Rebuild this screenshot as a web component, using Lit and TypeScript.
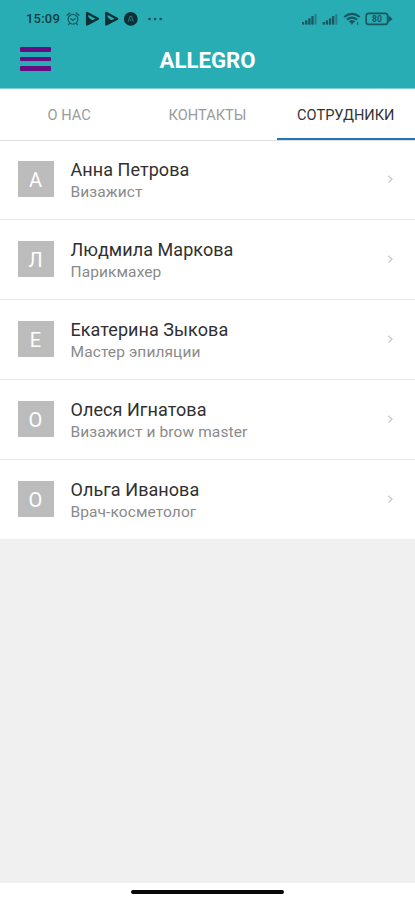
import { LitElement, html, css, svg } from "lit";
import { customElement, property, state } from "lit/decorators.js";
import { classMap } from "lit/directives/class-map.js";

interface Employee {
  name: string;
  role: string;
}

const EMPLOYEES: Employee[] = [
  { name: "Анна Петрова", role: "Визажист" },
  { name: "Людмила Маркова", role: "Парикмахер" },
  { name: "Екатерина Зыкова", role: "Мастер эпиляции" },
  { name: "Олеся Игнатова", role: "Визажист и brow master" },
  { name: "Ольга Иванова", role: "Врач-косметолог" },
];

@customElement("status-bar")
export class StatusBar extends LitElement {
  static styles = css`
    :host {
      display: flex;
      align-items: center;
      height: 37px;
      padding: 0 22px 0 26px;
      box-sizing: border-box;
      color: #14454c;
      font: 500 13px/38px Roboto, sans-serif;
    }
    .time {
      width: 40px;
      letter-spacing: 0.2px;
      white-space: nowrap;
      color: #123c43;
    }
    .left { display: block; }
    .right { display: block; margin-left: auto; }
    .charge { font: 700 8.5px Roboto, sans-serif; }
  `;

  private play(x: number) {
    return svg`<g transform="translate(${x} 0)">
      <path d="M1.6 3V14.4L12.4 8.7Z" fill="none" stroke="#0b3036" stroke-width="2.4" stroke-linejoin="round"/>
      <path d="M1.6 6V14L7.4 10.6L4.6 8.8Z" fill="#0b3036"/>
    </g>`;
  }

  private signal(x: number) {
    return svg`<g transform="translate(${x} 0)" fill="#1b555d">
      <rect x="0" y="12" width="2.2" height="2.6"/>
      <rect x="3.1" y="10.3" width="2.3" height="4.3"/>
      <rect x="6.2" y="8.3" width="2.3" height="6.3"/>
      <rect x="9.3" y="6.1" width="2.3" height="8.5"/>
      <rect x="12.6" y="4" width="2" height="10.6" opacity=".55"/>
    </g>`;
  }

  render() {
    return html`
      <span class="time">15:09</span>
      <svg class="left" width="98" height="18" viewBox="0 0 98 18">
        <g fill="none" stroke="#1b5a62" stroke-width="1.3" stroke-linecap="round">
          <circle cx="7" cy="9.2" r="4.9"/>
          <path d="M1 5.2L3.8 3M13 5.2L10.2 3M3.4 13.5L2.5 14.6M10.6 13.5L11.5 14.6M4.8 8.8L7 10.5L9.4 8.6"/>
        </g>
        ${this.play(19.5)}${this.play(38.7)}
        <circle cx="64.8" cy="8.9" r="6.9" fill="#0b3036"/>
        <path d="M62.2 11.6L64.1 6.4H65.5L67.4 11.6M64.8 9.2V11" fill="none" stroke="#28777e" stroke-width="1.1"/>
        <g fill="#164b52">
          <circle cx="83.5" cy="9" r="1.3"/><circle cx="89" cy="9" r="1.3"/><circle cx="94.7" cy="9" r="1.3"/>
        </g>
      </svg>
      <svg class="right" width="92" height="18" viewBox="0 0 92 18">
        ${this.signal(1)}${this.signal(21.7)}
        <g fill="none" stroke="#1b555d" stroke-width="2.1">
          <path d="M43.2 7Q51 .8 58.8 7M45.8 9.8Q51 5.6 56.2 9.8M48.5 12.2Q51 9.9 53.5 12.2"/>
        </g>
        <path d="M49.4 12.5H52.6L51 14.9Z" fill="#1b555d"/>
        <path d="M56.6 12V14.8" stroke="#1b555d" stroke-width="1.2"/>
        <rect x="65.2" y="3.4" width="21.4" height="11" rx="2.4" fill="none" stroke="#1b555d" stroke-width="1.6"/>
        <path d="M87.4 5.2L91.6 8.9L87.4 12.6Z" fill="#1b555d"/>
        <text class="charge" x="75.9" y="12" text-anchor="middle" fill="#1b555d">80</text>
      </svg>
    `;
  }
}

@customElement("employee-row")
export class EmployeeRow extends LitElement {
  @property() name = "";
  @property() role = "";

  static styles = css`
    :host {
      display: flex;
      align-items: center;
      height: 80px;
      box-sizing: border-box;
      padding: 0 20px 1px 17.5px;
      border-top: 1px solid #e8e8e8;
      background: #fff;
    }
    .avatar {
      width: 36px;
      height: 36px;
      margin-right: 17px;
      flex: none;
      background: #bcbcbc;
      color: #fff;
      text-align: center;
      font-size: 20px;
      line-height: 38px;
    }
    .info {
      flex: 1;
      padding-top: 2px;
      white-space: nowrap;
    }
    .name {
      color: #303030;
      font-size: 18px;
      line-height: 24px;
      letter-spacing: 0.06px;
    }
    .role {
      color: #8a8a8a;
      font-size: 15.5px;
      line-height: 21px;
      letter-spacing: 0.1px;
    }
    .arrow { flex: none; }
  `;

  render() {
    return html`
      <div class="avatar">${this.name.charAt(0)}</div>
      <div class="info">
        <div class="name">${this.name}</div>
        <div class="role">${this.role}</div>
      </div>
      <svg class="arrow" width="8" height="10" viewBox="0 0 8 10">
        <path d="M1.5 1.8L5 5.2L1.5 8.6" fill="none" stroke="#cacaca" stroke-width="1.3"/>
      </svg>
    `;
  }
}

@customElement("app-root")
export class AppRoot extends LitElement {
  @state() private active = 2;
  private tabs = ["О НАС", "КОНТАКТЫ", "СОТРУДНИКИ"];

  static styles = css`
    :host {
      display: flex;
      flex-direction: column;
      height: 900px;
      background: #f0f0f0;
      font-family: Roboto, sans-serif;
      overflow: hidden;
    }
    header {
      height: 88px;
      background: #29adb5;
      border-bottom: 1px solid #80d0d6;
      flex: none;
    }
    .bar {
      display: grid;
      grid-template-columns: 60px 1fr 60px;
      align-items: center;
      height: 45px;
    }
    .menu {
      display: flex;
      flex-direction: column;
      gap: 5px;
      width: 31px;
      margin: 0 0 2px 20px;
    }
    .menu span { height: 4.4px; background: #660c80; border-radius: 1px; }
    h1 {
      margin: 0;
      color: #fff;
      text-align: center;
      font-size: 22.2px;
      font-weight: 700;
      line-height: 46px;
    }
    nav {
      display: grid;
      grid-template-columns: 1fr 1fr 1fr;
      height: 52px;
      margin-bottom: -2px;
      box-sizing: border-box;
      border-bottom: 1px solid #dedede;
      background: #fff;
      position: relative;
      z-index: 1;
      flex: none;
    }
    .tab {
      box-sizing: border-box;
      text-align: center;
      color: #9b9b9b;
      font-size: 14.6px;
      line-height: 52px;
      white-space: nowrap;
    }
    .tab.active {
      color: #333;
      height: 51px;
      border-bottom: 2px solid #1f78b4;
    }
    main { flex: 1; }
    footer {
      display: flex;
      justify-content: center;
      height: 17px;
      background: #fff;
      flex: none;
    }
    .handle {
      width: 153px;
      height: 4px;
      margin-top: 7px;
      border-radius: 2px;
      background: #080808;
    }
  `;

  render() {
    return html`
      <header>
        <status-bar></status-bar>
        <div class="bar">
          <div class="menu"><span></span><span></span><span></span></div>
          <h1>ALLEGRO</h1>
        </div>
      </header>
      <nav>
        ${this.tabs.map(
          (t, i) => html`<div
            class=${classMap({ tab: true, active: i === this.active })}
            @click=${() => (this.active = i)}
          >${t}</div>`
        )}
      </nav>
      <main>
        ${EMPLOYEES.map((e) => html`<employee-row .name=${e.name} .role=${e.role}></employee-row>`)}
      </main>
      <footer><div class="handle"></div></footer>
    `;
  }
}
